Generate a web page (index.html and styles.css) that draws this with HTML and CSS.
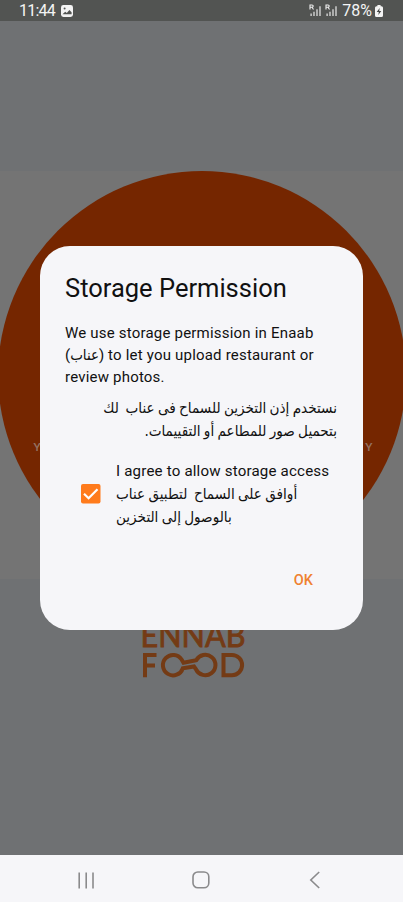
FILE: index.html
```html
<!DOCTYPE html>
<html lang="en">
<head>
<meta charset="utf-8">
<title>Storage Permission</title>
<link rel="stylesheet" href="styles.css">
</head>
<body>
<div class="screen">
  <header class="status">
    <span class="clock">11:44</span>
    <svg class="photo" width="12" height="12" viewBox="0 0 12 12"><rect width="12" height="12" rx="2.4" fill="#f4f4f4"/><circle cx="3.6" cy="3.6" r="1" fill="#525452"/><path d="M1.5 9.3 4.2 6.7 5.8 8 8.4 5 10.6 7.3V9.3Z" fill="#525452"/></svg>
    <span class="spacer"></span>
    <svg class="signals" width="29" height="13" viewBox="0 0 29 13">
      <g id="signal"><path d="M1 5.5V1H3Q4.2 1 4.2 2.1T3 3.3H1M3 3.3 4.5 5.5" fill="none" stroke="#eee" stroke-width="1.1"/><path d="M2.1 12V9.6M5 12V7.7M8 12V5.2M11 12V2.2" stroke="#ddd" stroke-width="1.3"/></g>
      <use href="#signal" x="16"/>
    </svg>
    <span class="percent">78%</span>
    <svg class="battery" width="8" height="12" viewBox="0 0 8 12"><path d="M2.4 0H5.6V1.3H6.5Q8 1.3 8 2.8V10.5Q8 12 6.5 12H1.5Q0 12 0 10.5V2.8Q0 1.3 1.5 1.3H2.4Z" fill="#f4f4f4"/><path d="M4.7 3 1.7 7H3.8L3.3 10 6.3 6H4.2Z" fill="#424442"/></svg>
  </header>
  <main class="splash">
    <section class="hero"><div class="disc"><span>Y</span><span>Y</span></div></section>
    <svg class="logo" width="104" height="58" viewBox="0 0 104 58">
      <g class="wordmark"><text x="-1.5" y="27.3" textLength="105" lengthAdjust="spacingAndGlyphs">ENNAB</text></g>
      <g class="strokes"><path d="M3 57.2V35H14.5M3 45.5H13"/><path d="M39.6 39.5A10.2 10.2 0 1 0 40.8 48.3L52 46.5 54 49.3A10.2 10.2 0 1 0 54.2 40.3L41.5 42.7Z"/><path d="M81.5 35H90A10.1 10.1 0 0 1 90 55.2H81.5Z"/></g>
    </svg>
  </main>
  <nav class="navbar">
    <svg width="17" height="17" viewBox="0 0 17 17"><path d="M1.2 .5V16.5M8.2 .5V16.5M15 .5V16.5"/></svg>
    <svg class="home" width="18" height="18" viewBox="0 0 18 18"><rect x="1" y="1" width="15.8" height="15.8" rx="4.8"/></svg>
    <svg width="12" height="18" viewBox="0 0 12 18"><path d="M10.2 1 1.8 9 10.2 17"/></svg>
  </nav>
  <div class="dialog" role="dialog">
    <h1>Storage Permission</h1>
    <p class="english"><span>We use storage permission in Enaab</span><span>(<bdi class="ar">عناب</bdi>) to let you upload restaurant or</span><span>review photos.</span></p>
    <p class="arabic ar" dir="rtl"><span>نستخدم إذن التخزين للسماح فى عناب&nbsp; لك</span><span>بتحميل صور للمطاعم أو التقييمات.</span></p>
    <label class="agree">
      <svg width="20" height="20" viewBox="0 0 20 20"><rect width="19.5" height="19.5" rx="2" fill="#ff7b1c"/><path d="M3 9.8 7.6 14.3 16.5 5.3" fill="none" stroke="#fff" stroke-width="2.2"/></svg>
      <span class="lines"><span>I agree to allow storage access</span><span class="ar" dir="rtl">أوافق على السماح&nbsp; لتطبيق عناب</span><span class="ar" dir="rtl">بالوصول إلى التخزين</span></span>
    </label>
    <button class="ok">OK</button>
  </div>
</div>
</body>
</html>
```
FILE: styles.css
```css
* { box-sizing: border-box; }
body { margin: 0; font-family: Roboto, sans-serif; }
.screen { position: relative; width: 403px; height: 902px; overflow: hidden; display: flex; flex-direction: column; background: #6f7173; }
.status { height: 21px; flex: none; display: flex; align-items: center; padding: 0 20px 0 19px; background: #525452; color: #f4f4f4; font-size: 16px; }
.clock { width: 36px; letter-spacing: -.8px; }
.photo { margin-left: 6px; }
.spacer { flex: 1; }
.percent { margin: 0 3px 0 4px; }
.splash { flex: 1; display: flex; flex-direction: column; align-items: center; padding-top: 150px; }
.hero { width: 403px; height: 408px; flex: none; background: #747474; overflow: hidden; display: flex; justify-content: center; }
.disc { width: 408px; height: 408px; flex: none; border-radius: 50%; background: #752600; display: flex; justify-content: space-between; align-items: flex-start; padding: 269px 33px 0 36px; color: #947161; font: 700 11px/14px Lato, sans-serif; }
.logo { margin: 41px 16px 0 0; overflow: visible; }
.wordmark { fill: #743b15; stroke: #743b15; stroke-width: .9; font: 400 33px Lato, sans-serif; }
.strokes { fill: none; stroke: #743b15; stroke-width: 4; }
.navbar { height: 47px; flex: none; background: #f6f6f9; display: flex; align-items: center; justify-content: space-between; padding: 3px 82px 0 78px; }
.navbar svg { fill: none; stroke: #8a8a8c; stroke-width: 1.6; }
.navbar .home { margin-right: 3px; }
.dialog { position: absolute; left: 39.5px; top: 245.5px; width: 323px; height: 384.5px; border-radius: 30px; background: #f6f6f9; color: #111; padding: 25.5px 25.5px 0; display: flex; flex-direction: column; }
h1 { margin: 0; font-weight: 400; font-size: 25.5px; line-height: 34px; white-space: nowrap; }
p { margin: 0; }
p span, .lines span { display: block; white-space: nowrap; }
.english { margin-top: 17px; font-size: 15px; line-height: 22px; letter-spacing: .2px; }
.arabic { margin-top: 8.5px; font-size: 15.1px; line-height: 23.5px; }
.ar { font-family: "DejaVu Sans Condensed", "DejaVu Sans", sans-serif; font-stretch: condensed; letter-spacing: 0; word-spacing: -1px; }
.agree { display: flex; align-items: center; gap: 15px; margin: 16px 0 0 16px; }
.lines { font-size: 15.1px; line-height: 23px; letter-spacing: .18px; }
.lines .ar { text-align: left; letter-spacing: 0; }
.ok { align-self: flex-end; margin: 42px 24px 0 0; padding: 0; border: 0; background: none; color: #ef8130; font: 500 14.5px/20px Roboto, sans-serif; }
```
